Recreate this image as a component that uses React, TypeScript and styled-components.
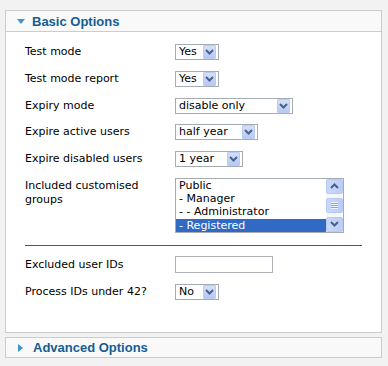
import React from 'react';
import styled, { createGlobalStyle } from 'styled-components';

const GlobalStyle = createGlobalStyle`
  body {
    margin: 0;
    background: #f2f2f2;
    font-family: "DejaVu Sans", Tahoma, sans-serif;
    font-size: 11px;
    color: #000;
  }
`;

const groups = ['Public', '- Manager', '- - Administrator', '- Registered'];

function Chevron({ up }: { up?: boolean }): React.ReactElement {
  return (
    <svg width="9" height="6" viewBox="0 0 9 6">
      <path
        d={up ? 'M1 5 L4.5 1.5 L8 5' : 'M1 1 L4.5 4.5 L8 1'}
        fill="none"
        stroke="#4d6185"
        strokeWidth="2"
      />
    </svg>
  );
}

function Select({ value, width }: { value: string; width: number }): React.ReactElement {
  return (
    <SelectBox $width={width}>
      <span>{value}</span>
      <ArrowButton>
        <Chevron />
      </ArrowButton>
    </SelectBox>
  );
}

function App(): React.ReactElement {
  return (
    <Page>
      <GlobalStyle />
      <Panel>
        <PanelHeader $open>
          <Triangle $open />
          Basic Options
        </PanelHeader>
        <PanelBody>
          <Row>
            <Label>Test mode</Label>
            <Select value="Yes" width={44} />
          </Row>
          <Row>
            <Label>Test mode report</Label>
            <Select value="Yes" width={44} />
          </Row>
          <Row>
            <Label>Expiry mode</Label>
            <Select value="disable only" width={118} />
          </Row>
          <Row>
            <Label>Expire active users</Label>
            <Select value="half year" width={83} />
          </Row>
          <Row>
            <Label>Expire disabled users</Label>
            <Select value="1 year" width={68} />
          </Row>
          <Row $top>
            <Label $wrap>Included customised groups</Label>
            <ListBox>
              <Options>
                {groups.map((g, i) => (
                  <Option key={g} $selected={i === 3}>
                    {g}
                  </Option>
                ))}
              </Options>
              <ScrollBar>
                <ScrollButton>
                  <Chevron up />
                </ScrollButton>
                <Thumb>
                  <Grip />
                </Thumb>
                <ScrollButton>
                  <Chevron />
                </ScrollButton>
              </ScrollBar>
            </ListBox>
          </Row>
          <Separator />
          <Row>
            <Label>Excluded user IDs</Label>
            <TextInput />
          </Row>
          <Row>
            <Label>Process IDs under 42?</Label>
            <Select value="No" width={44} />
          </Row>
        </PanelBody>
      </Panel>
      <Panel>
        <PanelHeader>
          <Triangle />
          Advanced Options
        </PanelHeader>
      </Panel>
    </Page>
  );
}

export default App;

const Page = styled.div`
  display: flex;
  flex-direction: column;
  gap: 4px;
  padding: 10px 6px 0 5px;
  width: 388px;
  height: 366px;
  box-sizing: border-box;
`;

const Panel = styled.div`
  border: 1px solid #cccccc;
  background: #fff;
`;

const PanelHeader = styled.div<{ $open?: boolean }>`
  display: flex;
  align-items: center;
  height: ${(p) => (p.$open ? 20 : 19)}px;
  padding-left: 11px;
  background: #f9f9f9;
  border-bottom: ${(p) => (p.$open ? '1px solid #cccccc' : 'none')};
  font-family: "Liberation Sans", Arial, sans-serif;
  font-weight: bold;
  font-size: 13px;
  color: #165d92;
`;

const Triangle = styled.span<{ $open?: boolean }>`
  width: 0;
  height: 0;
  margin-right: ${(p) => (p.$open ? 7 : 10)}px;
  margin-left: ${(p) => (p.$open ? 0 : 1)}px;
  ${(p) =>
    p.$open
      ? `border-left: 4px solid transparent;
         border-right: 4px solid transparent;
         border-top: 5px solid #3a95d0;`
      : `border-top: 4.5px solid transparent;
         border-bottom: 4.5px solid transparent;
         border-left: 5px solid #3a95d0;`}
`;

const PanelBody = styled.div`
  display: flex;
  flex-direction: column;
  gap: 10.75px;
  padding: 12px 19px 32px 19px;
`;

const Row = styled.div<{ $top?: boolean }>`
  display: flex;
  align-items: ${(p) => (p.$top ? 'flex-start' : 'center')};
`;

const Label = styled.div<{ $wrap?: boolean }>`
  width: ${(p) => (p.$wrap ? 120 : 150)}px;
  margin-right: ${(p) => (p.$wrap ? 30 : 0)}px;
  line-height: 14px;
  padding-top: ${(p) => (p.$wrap ? 1 : 0)}px;
`;

const SelectBox = styled.div<{ $width: number }>`
  display: flex;
  align-items: center;
  justify-content: space-between;
  width: ${(p) => p.$width}px;
  height: 16px;
  box-sizing: border-box;
  border: 1px solid #a5acb2;
  background: #fff;
  padding: 0 2px 0 3px;
  line-height: 14px;
  white-space: nowrap;
`;

const ArrowButton = styled.div`
  display: flex;
  align-items: center;
  justify-content: center;
  width: 13px;
  height: 14px;
  box-sizing: border-box;
  border: 1px solid #b9cbf3;
  border-radius: 1px;
  background: linear-gradient(#d4e0fb, #b6c9f5);
`;

const ListBox = styled.div`
  display: flex;
  width: 169px;
  height: 55px;
  box-sizing: border-box;
  border: 1px solid #a5acb2;
  background: #fff;
`;

const Options = styled.div`
  flex: 1;
  display: flex;
  flex-direction: column;
`;

const Option = styled.div<{ $selected?: boolean }>`
  height: 13.25px;
  line-height: 13px;
  padding-left: 3px;
  background: ${(p) => (p.$selected ? '#316ac5' : 'transparent')};
  color: ${(p) => (p.$selected ? '#fff' : '#000')};
  white-space: nowrap;
`;

const ScrollBar = styled.div`
  display: flex;
  flex-direction: column;
  justify-content: space-between;
  width: 17px;
  background: #f6f7fb;
`;

const ScrollButton = styled.div`
  display: flex;
  align-items: center;
  justify-content: center;
  height: 15px;
  box-sizing: border-box;
  border: 1px solid #b7c9f4;
  border-radius: 2px;
  background: linear-gradient(90deg, #cad8fb, #bccdf7);
`;

const Thumb = styled(ScrollButton)`
  height: 15px;
`;

const Grip = styled.div`
  width: 7px;
  height: 7px;
  background: repeating-linear-gradient(#eef3fe 0 1px, #8ca5e0 1px 2px);
`;

const Separator = styled.div`
  height: 1px;
  background: #555;
  margin-top: 1px;
`;

const TextInput = styled.div`
  width: 98px;
  height: 17px;
  box-sizing: border-box;
  border: 1px solid #b0b4b8;
  background: #fff;
`;
